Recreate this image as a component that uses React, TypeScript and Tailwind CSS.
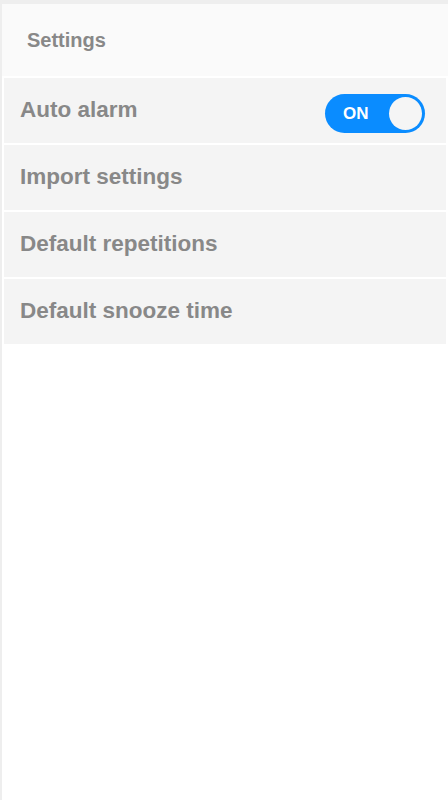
import { useState } from "react";

const rows = ["Auto alarm", "Import settings", "Default repetitions", "Default snooze time"];

const Toggle = ({ on, onClick }: any) => {
  return (
    <button
      onClick={onClick}
      className={
        "relative flex items-center w-[100px] h-[39px] mt-[6px] rounded-full " +
        (on ? "bg-[#0a8cff]" : "bg-[#cccccc]")
      }
    >
      <span
        className={
          "absolute text-white font-bold text-[17px] " + (on ? "left-[18px]" : "right-[16px]")
        }
      >
        {on ? "ON" : "OFF"}
      </span>
      <span
        className={
          "absolute top-[3px] w-[33px] h-[33px] rounded-full bg-[#f5f5f5] " +
          (on ? "right-[3px]" : "left-[3px]")
        }
      />
    </button>
  );
};

const App = () => {
  const [autoAlarm, setAutoAlarm] = useState(true);

  return (
    <div
      className="min-h-screen bg-white border-t-4 border-l-2 border-[#eeeeee]"
      style={{ fontFamily: '"Liberation Sans", Arial, sans-serif' }}
    >
      {/* header */}
      <div className="h-[72px] bg-[#fafafa] flex items-center pl-[25px]">
        <h1 className="text-[20px] font-bold text-[#888888]">Settings</h1>
      </div>

      <div className="flex flex-col gap-[2px] pt-[2px] pl-[2px] pr-[2px]">
        {rows.map((r, i) => (
          <div
            key={r}
            className="h-[65px] bg-[#f4f4f4] flex items-center justify-between pl-4 pr-[21px]"
          >
            <span className="text-[22.5px] font-bold text-[#888888] -mt-[1px]">{r}</span>
            {i === 0 && <Toggle on={autoAlarm} onClick={() => setAutoAlarm(!autoAlarm)} />}
          </div>
        ))}
      </div>
    </div>
  );
};

export default App;
